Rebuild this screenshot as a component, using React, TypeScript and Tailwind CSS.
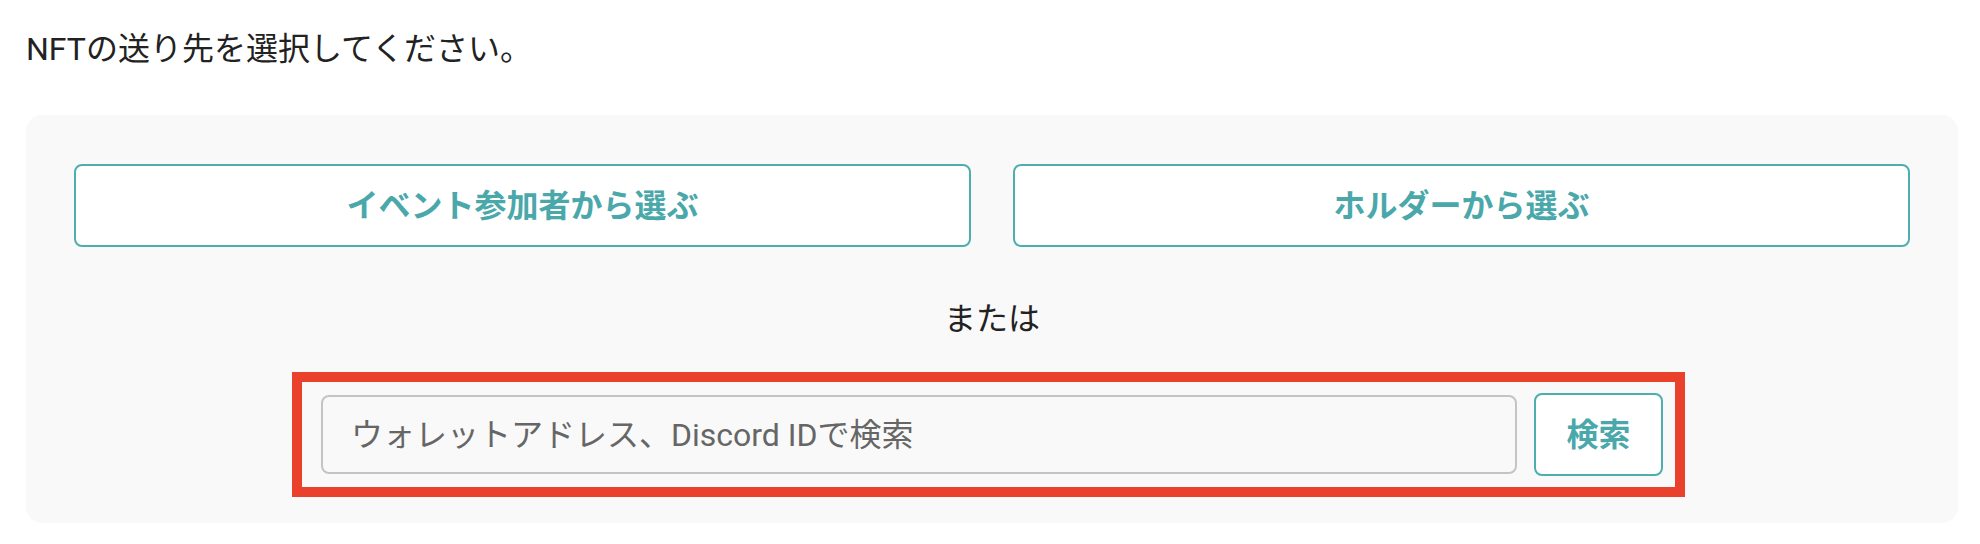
import React from "react";

export default function App() {
  return (
    <div className="w-[1980px] h-[544px] bg-white text-[#222222] font-['Roboto','Noto_Sans_CJK_JP',sans-serif]">
      <div className="pl-[26px] pr-[22px] pt-[25px]">
        <p className="text-[32px] leading-[48px]">NFTの送り先を選択してください。</p>
        <div className="mt-[42px] rounded-2xl bg-[#f9f9f9] px-[48px] pt-[49px] pb-[47px]">
          <div className="grid grid-cols-2 gap-[42px]">
            <button className="h-[83px] rounded-lg border-2 border-[#4daeb0] bg-white text-[32px] font-bold text-[#4aa8ab]">
              イベント参加者から選ぶ
            </button>
            <button className="h-[83px] rounded-lg border-2 border-[#4daeb0] bg-white text-[32px] font-bold text-[#4aa8ab]">
              ホルダーから選ぶ
            </button>
          </div>
          <p className="mt-[48px] text-center text-[32px] leading-[48px]">または</p>
          <div className="relative mx-auto mt-[50px] flex w-[1342px] items-center gap-[17px]">
            <div className="pointer-events-none absolute -left-[29px] -right-[22px] -top-[21px] -bottom-[21px] border-[10px] border-[#e9412b]" />
            <input
              className="h-[79px] min-w-0 flex-1 rounded-lg border-2 border-[#c4c4c4] bg-[#f9f9f9] pl-[28px] text-[32px] text-[#222] outline-none placeholder:text-[#666666]"
              placeholder="ウォレットアドレス、Discord IDで検索"
            />
            <button className="h-[83px] w-[129px] shrink-0 rounded-lg border-2 border-[#4daeb0] bg-white text-[32px] font-bold text-[#4aa8ab]">
              検索
            </button>
          </div>
        </div>
      </div>
    </div>
  );
}
